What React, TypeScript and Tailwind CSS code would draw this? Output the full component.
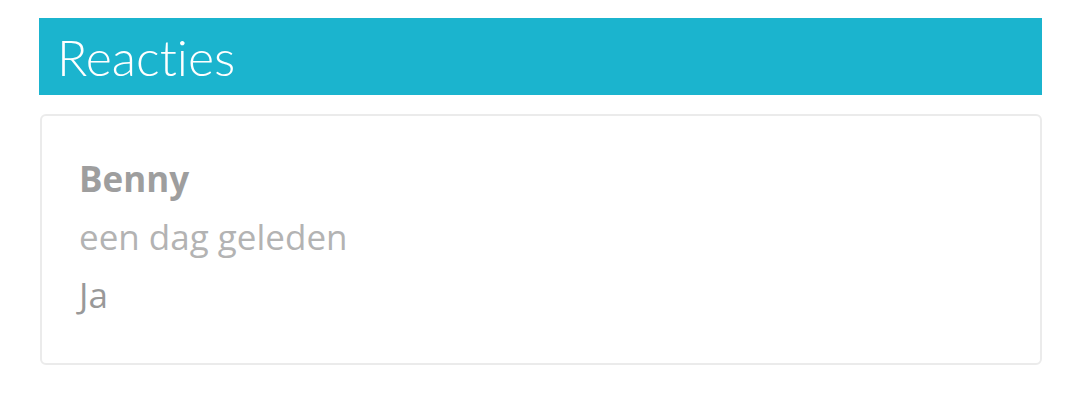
export default function App() {
  return (
    <div className="w-[1080px] h-[404px] bg-white pt-[18px] px-[39px]">
      <div className="h-[77px] w-[1003px] bg-[#1bb4ce] flex items-center pl-[18px]">
        <span className="text-white text-[50px] font-light leading-none [font-variant-ligatures:none]" style={{ fontFamily: 'Lato, "Noto Sans", sans-serif' }}>Reacties</span>
      </div>
      <div className="mt-[19px] ml-px w-[1002px] h-[251px] border-2 border-[#ebebeb] rounded-[6px] pl-[37px] pt-[34px]" style={{ fontFamily: '"Open Sans", sans-serif' }}>
        <div className="text-[35px] font-bold text-[#9e9e9e] leading-[58px]">Benny</div>
        <div className="text-[35px] text-[#b3b3b3] leading-[58px]">een dag geleden</div>
        <div className="text-[35px] text-[#999999] leading-[58px]">Ja</div>
      </div>
    </div>
  );
}
